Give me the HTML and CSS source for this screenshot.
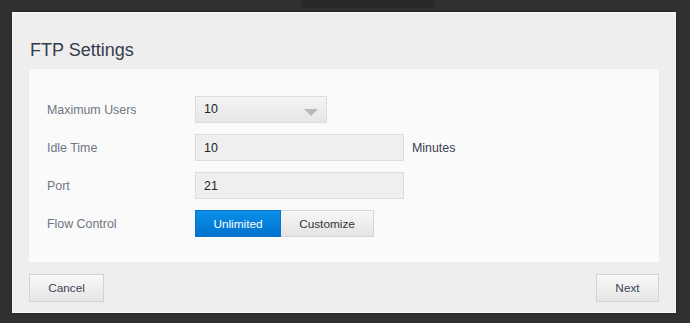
FILE: index.html
```html
<!DOCTYPE html>
<html lang="en">
<head>
  <meta charset="UTF-8">
  <title>FTP Settings</title>
  <link rel="stylesheet" href="styles.css">
</head>
<body>

  <!-- pagina de fondo -->
  <div class="page-strip">
    <div class="page-block"></div>
  </div>

  <div class="dialog">
    <h2 class="dialog-title">FTP Settings</h2>

    <div class="panel">
      <div class="row">
        <label class="row-label">Maximum Users</label>
        <div class="select">
          <span>10</span>
          <span class="arrow"></span>
        </div>
      </div>
      <div class="row">
        <label class="row-label">Idle Time</label>
        <input class="field" type="text" value="10">
        <span class="unit">Minutes</span>
      </div>
      <div class="row">
        <label class="row-label">Port</label>
        <input class="field" type="text" value="21">
      </div>
      <div class="row">
        <label class="row-label">Flow Control</label>
        <div class="toggle">
          <button class="toggle-btn active">Unlimited</button>
          <button class="toggle-btn">Customize</button>
        </div>
      </div>
    </div>

    <div class="footer">
      <button class="btn">Cancel</button>
      <button class="btn btn-next">Next</button>
    </div>
  </div>

</body>
</html>
```

FILE: styles.css
```css
* {
  margin: 0;
  padding: 0;
  box-sizing: border-box;
}

body {
  width: 690px;
  height: 323px;
  overflow: hidden;
  background: #303030;
  font-family: 'Liberation Sans', Arial, sans-serif;
}

.page-strip {
  height: 12px;
}

.page-block {
  margin-left: 302px;
  width: 133px;
  height: 8px;
  background: #292929;
}

.dialog {
  width: 664px;
  height: 301px;
  margin-left: 12px;
  background: #eeeeee;
  border: 1px solid #f8f8f8;
  padding: 0 16px;
  box-shadow: 0 0 2px rgba(0, 0, 0, 0.5);
}

.dialog-title {
  font-size: 18px;
  font-weight: normal;
  line-height: 22px;
  color: #343d4b;
  padding-top: 26px;
  padding-left: 1px;
  height: 56px;
}

.panel {
  background: #fafafa;
  height: 193px;
  padding: 27px 18px 0 18px;
  display: flex;
  flex-direction: column;
  gap: 11px;
}

.row {
  display: flex;
  align-items: center;
  height: 27px;
}

.row-label {
  width: 148px;
  font-size: 12.4px;
  color: #6e7782;
  margin-top: 1px;
}

.select {
  width: 132px;
  height: 27px;
  display: flex;
  align-items: center;
  justify-content: space-between;
  padding: 0 8px;
  font-size: 12.4px;
  color: #222;
  background: linear-gradient(to bottom, #f4f4f4, #e6e6e6);
  border: 1px solid #dcdcdc;
}

.select span:first-child {
  margin-top: -2px;
}

.arrow {
  width: 0;
  height: 0;
  border-left: 7px solid transparent;
  border-right: 7px solid transparent;
  border-top: 7px solid #b9b9b9;
  margin-top: 6px;
}

.field {
  width: 209px;
  height: 27px;
  padding: 0 8px;
  font-family: inherit;
  font-size: 12.4px;
  color: #222;
  background: #efefef;
  border: 1px solid #dddddd;
  outline: none;
}

.unit {
  margin-left: 8px;
  font-size: 12.4px;
  color: #3a4452;
  margin-top: 1px;
}

.toggle {
  display: flex;
}

.toggle-btn {
  height: 27px;
  width: 86px;
  font-family: inherit;
  font-size: 11.8px;
  color: #333;
  background: linear-gradient(to bottom, #f7f7f7, #e4e4e4);
  border: 1px solid #d6d6d6;
}

.toggle-btn + .toggle-btn {
  width: 93px;
  border-left: none;
}

.toggle-btn.active {
  color: white;
  background: linear-gradient(to bottom, #0b90ea, #0071cd);
  border-color: #0a74c8;
}

.footer {
  display: flex;
  justify-content: space-between;
  margin-top: 12px;
}

.btn {
  width: 75px;
  height: 28px;
  font-family: inherit;
  font-size: 11.8px;
  color: #3a4656;
  background: linear-gradient(to bottom, #f8f8f8, #e6e6e6);
  border: 1px solid #d2d2d2;
}

.btn-next {
  width: 63px;
}
```
